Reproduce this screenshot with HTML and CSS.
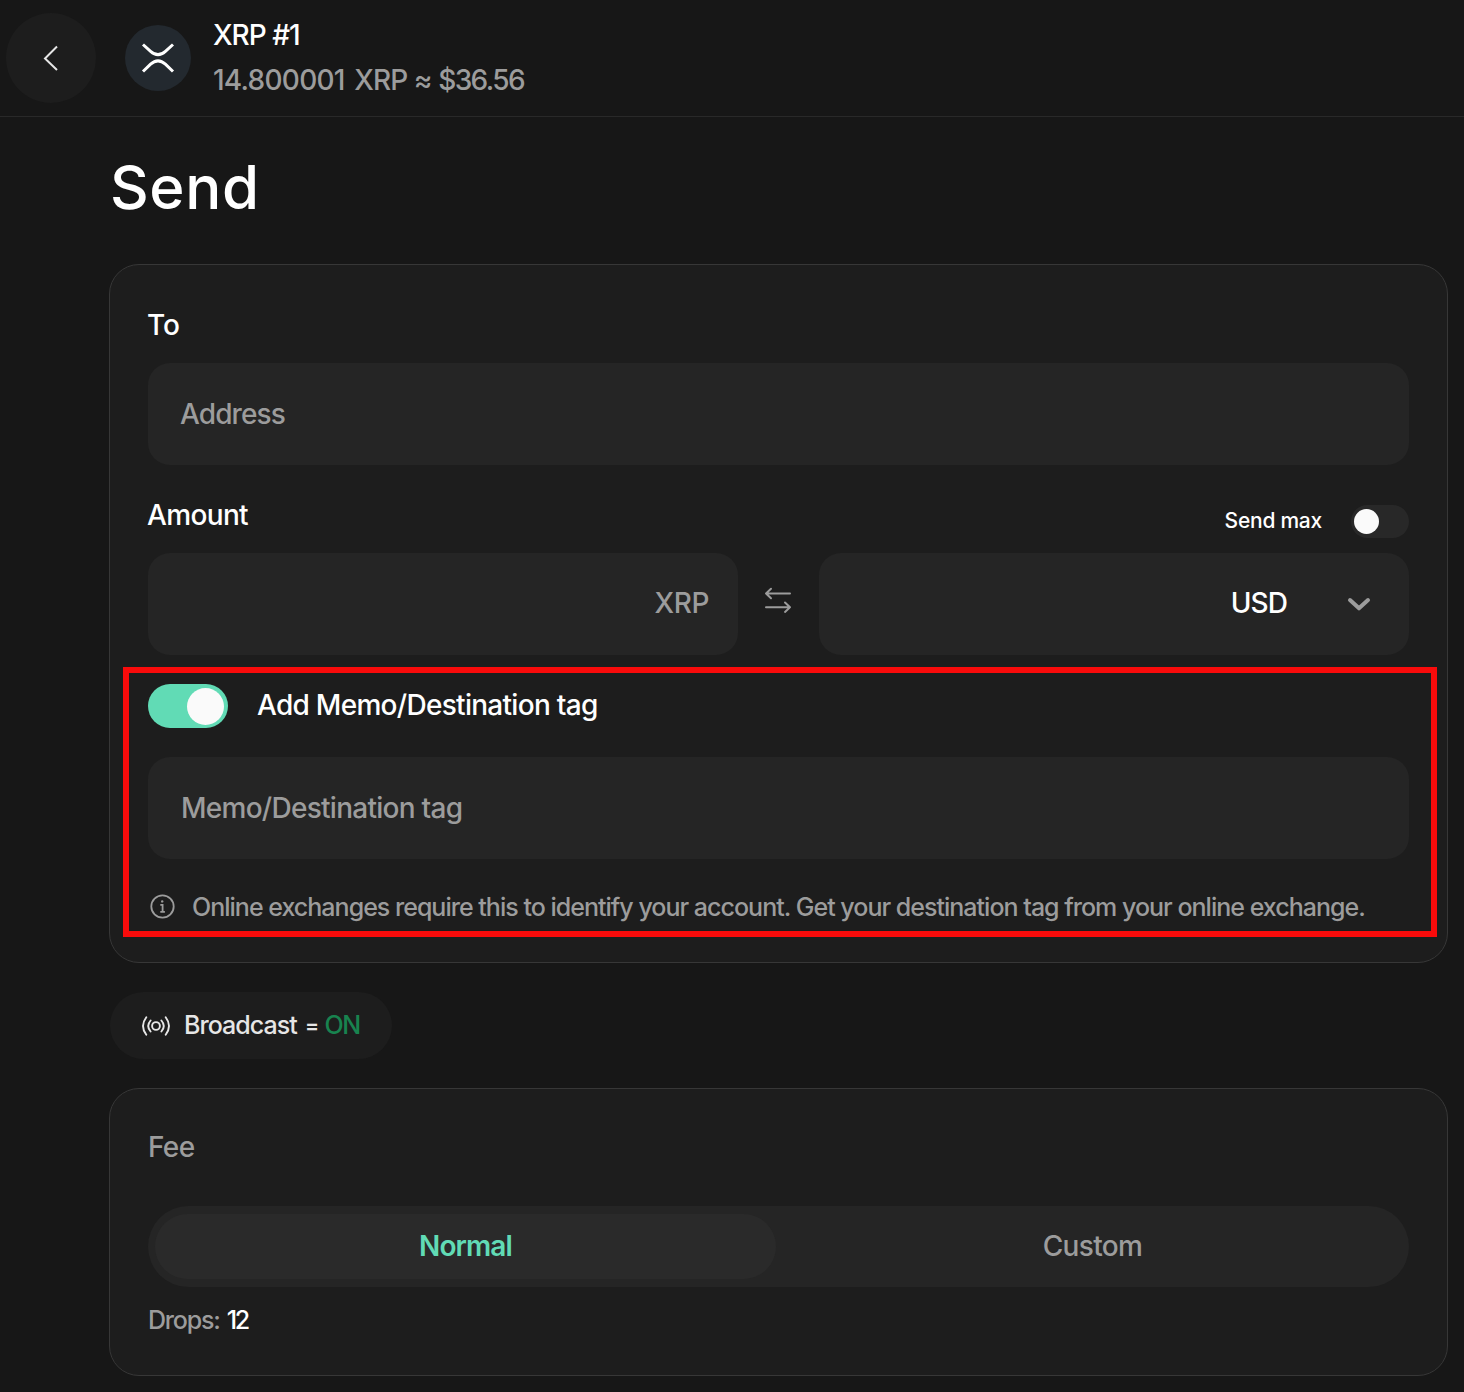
FILE: index.html
```html
<!DOCTYPE html>
<html lang="en">
<head>
<meta charset="utf-8">
<title>Send XRP</title>
<link rel="stylesheet" href="styles.css">
</head>
<body>
<header class="topbar">
  <button class="back" aria-label="Back">
    <svg width="18" height="28" viewBox="0 0 18 28"><path d="M15 2.500 3 14.500l12 11.500"/></svg>
  </button>
  <div class="coin">
    <svg width="34" height="30" viewBox="0 0 34 30"><path d="M2 1.500 9.600 8.300Q17 15 24.400 8.300L32 1.500M2 28.500 9.600 21.200Q17 14.500 24.400 21.200L32 28.500"/></svg>
  </div>
  <div class="account">
    <div class="account-name">XRP #1</div>
    <div class="account-balance"><span class="balance-amount">14.800001</span> XRP ≈ <span class="balance-fiat">$36.56</span></div>
  </div>
</header>
<main class="content">
  <h1 class="title">Send</h1>

  <section class="card send-card">
    <div class="label label-to">To</div>
    <div class="field address">Address</div>
    <div class="amount-head">
      <div class="label">Amount</div>
      <div class="send-max"><span>Send max</span><i class="switch switch-small"></i></div>
    </div>
    <div class="amount-row">
      <div class="field field-crypto"><span>XRP</span></div>
      <svg class="swap" width="28" height="28" viewBox="0 0 28 28"><path d="M26 7.500H2M7 2.800l-5 4.700 5 4.700M2 21.200H26M21 16.500l5 4.700-5 4.700"/></svg>
      <div class="field field-fiat"><span>USD</span>
        <svg width="24" height="16" viewBox="0 0 24 16"><path d="M3 4 12 12.300l9-8.300"/></svg>
      </div>
    </div>
    <div class="memo">
      <div class="memo-head"><i class="switch switch-on"></i><span class="memo-title">Add Memo/Destination tag</span></div>
      <div class="field memo-field">Memo/Destination tag</div>
      <div class="hint">
        <svg width="26" height="26" viewBox="0 0 26 26"><circle cx="12.500" cy="12.500" r="11.200"/><path d="M10.300 10.900h2.300v7M10.300 17.900h4.600"/><circle class="dot" cx="12.200" cy="7.400" r="1.200"/></svg>
        <span>Online exchanges require this to identify your account. Get your destination tag from your online exchange.</span>
      </div>
    </div>
  </section>

  <button class="broadcast">
    <svg width="28" height="20" viewBox="0 0 28 20"><circle cx="14" cy="10" r="3.900"/><path d="M8.600 4.500Q3.800 10 8.600 15.500M19.400 4.500Q24.200 10 19.400 15.500M4.300 1.200Q-2.300 10 4.300 18.800M23.700 1.200Q30.300 10 23.700 18.800"/></svg>
    <span class="broadcast-name">Broadcast</span><span class="equals">=</span><span class="broadcast-state">ON</span>
  </button>

  <section class="card fee-card">
    <div class="label label-fee">Fee</div>
    <div class="segmented">
      <div class="segment active">Normal</div>
      <div class="segment">Custom</div>
    </div>
    <div class="drops"><span>Drops:</span><b>12</b></div>
  </section>
</main>
</body>
</html>
```
FILE: styles.css
```css
* { box-sizing: border-box; }
body {
  margin: 0;
  min-height: 1392px;
  background: #171717;
  color: #fff;
  font: 450 28px/36px Inter, "Liberation Sans", sans-serif;
  letter-spacing: -0.65px;
}
button { border: 0; font: inherit; color: inherit; letter-spacing: inherit; }
svg { display: block; flex: none; fill: none; stroke: currentColor; }
span, b { white-space: nowrap; }

.topbar {
  display: flex;
  align-items: center;
  height: 117px;
  padding-left: 6px;
  border-bottom: 1px solid #292929;
}
.back {
  display: flex;
  align-items: center;
  justify-content: center;
  width: 90px;
  height: 90px;
  padding: 0;
  border-radius: 50%;
  background: #1d1d1d;
  color: #e6e6e6;
  stroke-width: 2;
}
.coin {
  display: flex;
  align-items: center;
  justify-content: center;
  width: 66px;
  height: 66px;
  margin: 0 22px 0 29px;
  border-radius: 50%;
  background: #23292f;
  stroke-width: 3;
}
.account { line-height: 45px; letter-spacing: -1px; }
.account-balance { color: #9c9c9c; letter-spacing: -0.9px; }
.balance-amount { margin-right: 3px; letter-spacing: -0.75px; }
.balance-fiat { letter-spacing: -1.6px; }

.content { padding: 0 16px 0 109px; }
.title {
  height: 147px;
  margin: 0;
  padding: 33px 0 0 1px;
  font-size: 60px;
  font-weight: 500;
  line-height: 74px;
  letter-spacing: 0.6px;
}

.card {
  border: 1px solid #373737;
  border-radius: 30px;
  background: #1d1d1d;
}
.send-card { height: 699px; padding: 42px 38px 0; }
.label { height: 36px; margin-left: -1px; }
.label-to { letter-spacing: 0; }
.label-fee { margin-left: 0; color: #9c9c9c; }
.field {
  display: flex;
  align-items: center;
  height: 102px;
  padding: 0 33px;
  border-radius: 22px;
  background: #252525;
  color: #9c9c9c;
}
.address { margin-top: 20px; padding-left: 32px; letter-spacing: -0.9px; }
.amount-head {
  display: flex;
  justify-content: space-between;
  height: 88px;
  padding-top: 32px;
}
.send-max {
  display: flex;
  align-items: center;
  gap: 29px;
  height: 49px;
  font-size: 21px;
  letter-spacing: -0.25px;
}
.send-max span { padding-bottom: 2px; }
.switch {
  display: flex;
  align-items: center;
  width: 80px;
  height: 44px;
  padding: 0 4px;
  border-radius: 22px;
}
.switch::before {
  content: "";
  width: 37px;
  height: 37px;
  border-radius: 50%;
  background: #fafafa;
}
.switch-on { justify-content: flex-end; background: #61dbb5; }
.switch-small { width: 58px; height: 33px; padding: 0 3px; background: #282828; }
.switch-small::before { width: 25px; height: 25px; }

.amount-row {
  display: grid;
  grid-template-columns: 590px 81px 590px;
}
.amount-row span { padding-bottom: 2px; }
.field-crypto { justify-content: flex-end; padding-right: 29px; letter-spacing: -0.4px; }
.swap {
  place-self: center;
  margin: 0 2px 9px 0;
  color: #9c9c9c;
  stroke-width: 2;
  stroke-linecap: round;
  stroke-linejoin: round;
}
.field-fiat {
  justify-content: flex-end;
  gap: 60px;
  padding-right: 38px;
  color: #fff;
  letter-spacing: -0.9px;
}
.field-fiat svg { color: #9c9c9c; stroke-width: 4; stroke-linecap: round; stroke-linejoin: round; }

.memo {
  height: 270px;
  margin: 12px -28px 0 -25px;
  padding: 11px 22px 0 19px;
  border: 6px solid #f90b0b;
}
.memo-head { display: flex; gap: 29px; height: 73px; align-items: flex-start; }
.memo-title { line-height: 43px; letter-spacing: -0.71px; }
.memo-field { letter-spacing: -0.73px; }
.hint {
  display: flex;
  align-items: center;
  gap: 16px;
  height: 36px;
  margin-top: 30px;
  padding-left: 2px;
  color: #9c9c9c;
  font-size: 25px;
  letter-spacing: -0.985px;
}
.hint svg { stroke-width: 1.8; }
.hint .dot { fill: currentColor; stroke: none; }

.broadcast {
  display: flex;
  align-items: center;
  width: 282px;
  height: 67px;
  margin: 29px 0 29px 1px;
  padding: 0 0 0 31.5px;
  border-radius: 34px;
  background: #1d1d1d;
  color: #e6e6e6;
  font-size: 25px;
  stroke-width: 1.9;
  stroke-linecap: round;
}
.broadcast span { padding-bottom: 1px; }
.broadcast-name { margin-left: 14.5px; letter-spacing: -0.95px; }
.broadcast .equals { margin-left: 8px; padding-bottom: 0; font-size: 21px; font-weight: 600; }
.broadcast-state { margin-left: 6px; color: #18834f; letter-spacing: -1.2px; }

.fee-card { height: 288px; padding: 40px 38px 0; }
.segmented {
  display: grid;
  grid-template-columns: 621px 1fr;
  gap: 7px;
  height: 81px;
  margin-top: 41px;
  padding: 8px 7px;
  border-radius: 41px;
  background: #252525;
}
.segment {
  display: flex;
  align-items: center;
  justify-content: center;
  padding-bottom: 1px;
  border-radius: 33px;
  color: #9c9c9c;
}
.active { background: #2a2a2a; color: #61dbb5; font-weight: 600; letter-spacing: -0.9px; }
.drops {
  display: flex;
  gap: 7px;
  margin-top: 15px;
  font-size: 25px;
  letter-spacing: -1.2px;
  color: #9c9c9c;
}
.drops b { font-weight: 500; color: #fff; letter-spacing: -2.2px; }
```
